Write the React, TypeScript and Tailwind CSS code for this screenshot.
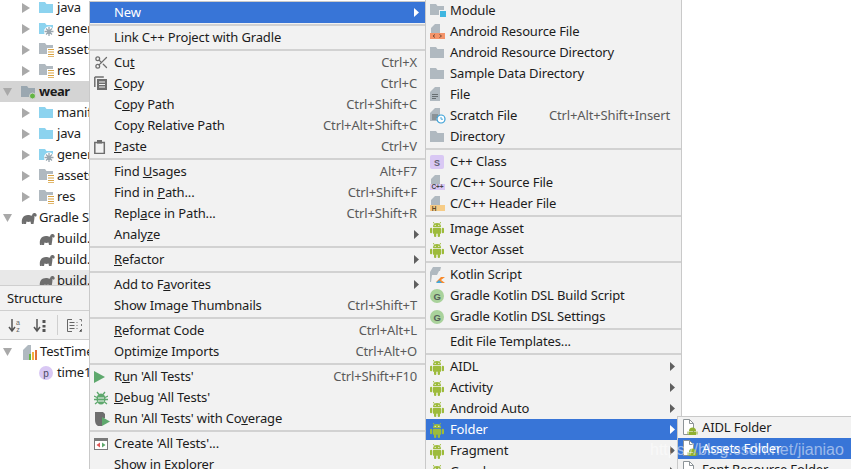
import React from "react";
import { Scissors } from "lucide-react";

type I = React.ReactNode;

const Sv = ({ w = 16, h = 16, children }: { w?: number; h?: number; children: I }) => (
  <svg width={w} height={h} viewBox={`0 0 ${w} ${h}`} className="shrink-0">
    {children}
  </svg>
);

const FOLDER = "M0 1h6l1.5 2H14v9H0z";

const Folder = ({ c = "#b0b9c0" }: { c?: string }) => (
  <Sv w={15} h={13}><path d={FOLDER} fill={c} /></Sv>
);
const BlueFolder = () => <Folder c="#8cd3ef" />;
const GenFolder = () => (
  <Sv w={15} h={14}>
    <path d={FOLDER} fill="#8cd3ef" />
    <circle cx="10" cy="9.5" r="5" fill="#fff" />
    <path d="M10 5v9M5.5 9.5h9M7 6.5l6 6M13 6.5l-6 6" stroke="#9aa7b0" strokeWidth="1.3" />
  </Sv>
);
const ResFolder = () => (
  <Sv w={16} h={15}>
    <path d={FOLDER} fill="#b0b9c0" />
    <rect x="8" y="6" width="8" height="9" fill="#fff" />
    <path d="M9 7.5h6M9 10h6M9 12.5h6M9 14.7h6" stroke="#d9a343" strokeWidth="1.1" />
  </Sv>
);
const WearFolder = () => (
  <Sv w={15} h={15}>
    <path d={FOLDER} fill="#9aa7b0" />
    <circle cx="11.5" cy="11" r="3" fill="#62b543" stroke="#d4d4d4" />
  </Sv>
);
const Elephant = () => (
  <Sv w={16} h={13}>
    <path
      d="M1 13C0 8 2 4 7 4c2 0 3 1 4 .5C11.500 2 13 1.500 14.500 2.200 16 3 16 5 15 5.500c-1 .5-1-.5-1.500-.5 0 3-.5 5-1 8H10l-.5-2.500c-1.500.5-3 .5-4 0L5 13H3l-.2-2.500L2.800 13z"
      fill="#6e6e6e"
    />
  </Sv>
);

const Tri = () => (
  <svg width="8" height="10" viewBox="0 0 8 10" className="shrink-0"><path d="M0 0l8 5-8 5z" fill="#a9a9a9" /></svg>
);
const TriDown = () => (
  <svg width="9" height="8" viewBox="0 0 9 8" className="shrink-0"><path d="M0 0h9L4.500 8z" fill="#a9a9a9" /></svg>
);

const Row = ({ label, icon, bold }: { label: string; icon: I; bold?: boolean }) => (
  <div className="flex h-[21px] items-center whitespace-nowrap pl-[22px]">
    <div className="flex w-[17px] shrink-0"><Tri /></div>
    <div className="flex w-[18px] shrink-0 justify-start">{icon}</div>
    <span className={bold ? "font-bold" : ""}>{label}</span>
  </div>
);

const Android = () => (
  <Sv w={14} h={16}>
    <g fill="#9dbb3b">
      <path d="M3 6a4 4 0 0 1 8 0z" />
      <path d="M4.300 2.800L3.300 1M9.700 2.800l1-1.800" stroke="#9dbb3b" strokeWidth=".9" />
      <rect x="3" y="6.800" width="8" height="6" rx=".6" />
      <rect x="0" y="6.800" width="2.300" height="5.500" rx="1.100" />
      <rect x="11.700" y="6.800" width="2.300" height="5.500" rx="1.100" />
      <rect x="4" y="12" width="2.300" height="4" rx="1" />
      <rect x="7.700" y="12" width="2.300" height="4" rx="1" />
    </g>
    <circle cx="5.200" cy="4.400" r=".6" fill="#f2f2f2" />
    <circle cx="8.800" cy="4.400" r=".6" fill="#f2f2f2" />
  </Sv>
);
const Sheet = ({ c = "#b0b9c0" }: { c?: string }) => <path d="M5 0h5v9H1V4z" fill={c} />;
const GrayFolderIcon = () => <Folder />;
const ModuleIcon = () => (
  <Sv w={16} h={15}>
    <path d={FOLDER} fill="#b0b9c0" />
    <rect x="9" y="7" width="7" height="7" fill="#f2f2f2" />
    <rect x="10" y="8" width="6" height="6" fill="#40b6e0" />
  </Sv>
);
const ResFile = () => (
  <Sv w={16} h={15}>
    <Sheet />
    <rect x="0" y="9" width="15" height="6" fill="#f4946a" />
    <path d="M5 10.500L3 12l2 1.500M9.500 10.500l2 1.500-2 1.500" stroke="#5a3a28" strokeWidth=".8" fill="none" />
  </Sv>
);
const FileIcon = () => (
  <Sv w={14} h={15}>
    <path d="M5 0h5v14H0V5z" fill="#b0b9c0" />
    <path d="M2 7.500h6M2 9.500h6M2 11.500h4" stroke="#5f6568" strokeWidth=".9" />
  </Sv>
);
const ScratchIcon = () => (
  <Sv w={16} h={16}>
    <path d="M5 0h5v13H0V5z" fill="#b0b9c0" />
    <path d="M2 7h6M2 9h6M2 11h4" stroke="#5f6568" strokeWidth=".9" />
    <circle cx="11" cy="11" r="4" fill="#fff" stroke="#389fd6" strokeWidth="1.200" />
    <path d="M11 9v2.200h2" stroke="#389fd6" strokeWidth=".9" fill="none" />
  </Sv>
);
const SIcon = () => (
  <Sv w={14} h={14}>
    <rect width="14" height="14" rx="2" fill="#d9c8f4" />
    <text x="7" y="10.500" textAnchor="middle" fontSize="9" fontWeight="700" fill="#5f5f70" fontFamily="Liberation Sans">S</text>
  </Sv>
);
const CppIcon = () => (
  <Sv w={16} h={15}>
    <Sheet />
    <rect x="0" y="9" width="15" height="6" fill="#d9c8f4" />
    <text x="7.500" y="14.300" textAnchor="middle" fontSize="6.500" fontWeight="700" fill="#444" fontFamily="Liberation Sans">C++</text>
  </Sv>
);
const HIcon = () => (
  <Sv w={16} h={15}>
    <Sheet />
    <rect x="0" y="9" width="15" height="6" fill="#f6cc87" />
    <text x="4" y="14.500" textAnchor="middle" fontSize="6.500" fontWeight="700" fill="#5a4a2a" fontFamily="Liberation Sans">H</text>
  </Sv>
);
const KotlinIcon = () => (
  <Sv w={15} h={16}>
    <path d="M3 0h8l-1 4H9L7 8H2L1 15H0V5z" fill="#b0b9c0" />
    <path d="M6 15l5-5h4l-4 3 4 3H8z" fill="#f88a2c" />
    <path d="M6 16l3-3 3 3z" fill="#40a8e0" />
  </Sv>
);
const GIcon = () => (
  <Sv w={14} h={14}>
    <circle cx="7" cy="7" r="7" fill="#a9d29b" />
    <text x="7" y="10.500" textAnchor="middle" fontSize="9.500" fontWeight="700" fill="#54605a" fontFamily="Liberation Sans">G</text>
  </Sv>
);
const FolderFile = () => (
  <Sv w={18} h={17}>
    <path d="M1.500.5h6l4 4v11h-10z" fill="#fff" stroke="#8d9498" />
    <path d="M7.500 .5v4h4" fill="none" stroke="#8d9498" />
    <g fill="#8fb030">
      <path d="M7 12a3.500 3.500 0 0 1 7 0z" />
      <rect x="7" y="12.500" width="7" height="3.500" />
      <rect x="5.500" y="12.500" width="1" height="3" />
      <rect x="14.500" y="12.500" width="1" height="3" />
    </g>
  </Sv>
);

const CopyIcon = () => (
  <Sv w={14} h={15}>
    <path d="M.8 1h9" stroke="#6e6e6e" strokeWidth="1.500" />
    <path d="M.8 1v10" stroke="#6e6e6e" strokeWidth="1.500" />
    <rect x="3" y="3" width="10" height="11" fill="#6e6e6e" />
    <path d="M5 6h6M5 8.500h6M5 11h6" stroke="#f2f2f2" />
  </Sv>
);
const PasteIcon = () => (
  <Sv w={12} h={14}>
    <rect x=".8" y="2.500" width="9.500" height="11" fill="none" stroke="#6e6e6e" strokeWidth="1.500" />
    <rect x="3" y="0" width="5" height="3.500" fill="#6e6e6e" />
  </Sv>
);
const RunIcon = () => (
  <Sv w={11} h={12}><path d="M0 0l11 6-11 6z" fill="#5ea86d" /></Sv>
);
const BugIcon = () => (
  <Sv w={14} h={14}>
    <ellipse cx="7" cy="8" rx="4.500" ry="5.500" fill="#5ea86d" />
    <path d="M3 1l2 2.500M11 1L9 3.500M0 5l3 1.500M14 5l-3 1.500M0 8.500h3M14 8.500h-3M1 13l2.500-2M13 13l-2.500-2" stroke="#5ea86d" strokeWidth="1.300" />
    <path d="M4 7h6M4 10h6" stroke="#f2f2f2" />
  </Sv>
);
const CoverageIcon = () => (
  <Sv w={16} h={14}>
    <path d="M1 0h8l2 2v4L8 8v6H4C2 13 1 11 1 8z" fill="#6e6e6e" />
    <path d="M8 5l8 4.500L8 14z" fill="#5ea86d" />
  </Sv>
);
const CreateIcon = () => (
  <Sv w={14} h={12}>
    <rect x=".5" y=".5" width="13" height="11" fill="#fff" stroke="#7a7a7a" />
    <path d="M1 1h12v2H1z" fill="#7a7a7a" />
    <path d="M6 4.500v5L2.500 7z" fill="#e05555" />
    <path d="M8 4.500v5L11.500 7z" fill="#5ea86d" />
  </Sv>
);

const Arrow = ({ white }: { white?: boolean }) => (
  <svg width="5" height="9" viewBox="0 0 5 9" className="absolute right-[6px] top-[6px]">
    <path d="M0 0l5 4.500L0 9z" fill={white ? "#ffffff" : "#5f5f5f"} />
  </svg>
);

const Item = ({
  icon,
  children,
  keys,
  arrow,
  active,
  right = "pr-[8px]",
}: {
  icon?: I;
  children: I;
  keys?: string;
  arrow?: boolean;
  active?: boolean;
  right?: string;
}) => (
  <div className={`relative flex h-[21px] items-center whitespace-nowrap ${right} ${active ? "bg-[#3875d7] text-white" : "text-[#1c1c1c]"}`}>
    <div className="flex w-[24px] shrink-0 items-center pl-[4px]">{icon}</div>
    <span className="flex-1">{children}</span>
    {keys && <span className="text-[#5a5a5a]">{keys}</span>}
    {arrow && <Arrow white={active} />}
  </div>
);

const Sep = () => (
  <div className="h-[4px] pt-[1px]"><div className="h-[2px] bg-[#d2d2d2]" /></div>
);

const ToolIcons = () => (
  <div className="flex h-[29px] items-center border-b border-[#cfcfcf] bg-[#f2f2f2]">
    <svg width="14" height="15" viewBox="0 0 14 15" className="ml-[8px] shrink-0">
      <path d="M4 1v11M1 9l3 4 3-4" stroke="#555" strokeWidth="1.500" fill="none" />
      <text x="10" y="7" textAnchor="middle" fontSize="7" fill="#666" fontFamily="Liberation Sans">a</text>
      <text x="10" y="14" textAnchor="middle" fontSize="7" fill="#666" fontFamily="Liberation Sans">z</text>
    </svg>
    <svg width="14" height="15" viewBox="0 0 14 15" className="ml-[11px] shrink-0">
      <path d="M4 1v11M1 9l3 4 3-4" stroke="#555" strokeWidth="1.500" fill="none" />
      <path d="M9.500 2h3v3h-3zM9.500 7h3v2.500h-3zM9.500 11h3v3h-3z" fill="#555" />
    </svg>
    <div className="ml-[10px] h-[20px] w-px bg-[#cfcfcf]" />
    <svg width="15" height="13" viewBox="0 0 15 13" className="ml-[9px] shrink-0">
      <path d="M5 .5H.5v12H5" stroke="#666" fill="none" />
      <path d="M2.500 3.500h5M2.500 6.500h5M2.500 9.500h5" stroke="#666" />
      <path d="M9.500 3.500h1M9.500 6.500h1M9.500 9.500h1M12.500 .5h2M14.500 .5v2M14.500 5v2M14.500 10v2.500h-2" stroke="#777" />
    </svg>
  </div>
);

export default function App() {
  return (
    <div className="relative flex h-[469px] w-[851px] overflow-hidden bg-white font-['Noto_Sans','Liberation_Sans',sans-serif] text-[13px] tracking-[-0.14px] text-[#1c1c1c]">
      <aside className="flex w-[89px] shrink-0 flex-col overflow-hidden">
        <div className="-mt-[3px] h-[288px] overflow-hidden">
          <Row label="java" icon={<BlueFolder />} />
          <Row label="generated" icon={<GenFolder />} />
          <Row label="assets" icon={<ResFolder />} />
          <Row label="res" icon={<ResFolder />} />
          <div className="flex h-[21px] items-center whitespace-nowrap bg-[#d4d4d4] pl-[3px] pt-px">
            <div className="flex w-[18px] shrink-0"><TriDown /></div>
            <div className="flex w-[18px] shrink-0"><WearFolder /></div>
            <span className="font-bold tracking-[-0.5px]">wear</span>
          </div>
          <Row label="manifests" icon={<BlueFolder />} />
          <Row label="java" icon={<BlueFolder />} />
          <Row label="generated" icon={<GenFolder />} />
          <Row label="assets" icon={<ResFolder />} />
          <Row label="res" icon={<ResFolder />} />
          <div className="flex h-[21px] items-center whitespace-nowrap pl-[3px]">
            <div className="flex w-[18px] shrink-0"><TriDown /></div>
            <div className="flex w-[18px] shrink-0"><Elephant /></div>
            <span>Gradle Scripts</span>
          </div>
          {[0, 1, 2].map((i) => (
            <div key={i} className={`flex h-[21px] items-center whitespace-nowrap pl-[39px] ${i === 2 ? "bg-[#e8e8e8]" : ""}`}>
              <div className="flex w-[18px] shrink-0"><Elephant /></div>
              <span>build.gradle</span>
            </div>
          ))}
        </div>
        <div className="flex h-[26px] shrink-0 items-center border-t border-b border-[#cfcfcf] bg-[#f2f2f2] pl-[7px] pt-[2px]">Structure</div>
        <ToolIcons />
        <div className="pt-px">
          <div className="flex h-[21px] items-center whitespace-nowrap pl-[3px]">
            <div className="flex w-[20px] shrink-0"><TriDown /></div>
            <svg width="14" height="16" viewBox="0 0 14 16" className="mr-[3px] shrink-0">
              <path d="M0 6l5-5h3v15H0z" fill="#b0b9c0" />
              <rect x="6" y="10" width="2" height="6" fill="#62b543" />
              <rect x="9" y="8" width="2" height="8" fill="#f4af3d" />
              <rect x="12" y="6" width="2" height="10" fill="#e0713a" />
            </svg>
            <span>TestTimeDemo</span>
          </div>
          <div className="flex h-[21px] items-center whitespace-nowrap pl-[39px]">
            <svg width="14" height="14" viewBox="0 0 14 14" className="mr-[4px] shrink-0">
              <circle cx="7" cy="7" r="7" fill="#d9c8f4" />
              <text x="7" y="10.500" textAnchor="middle" fontSize="10" fill="#4a4a60" fontFamily="Liberation Sans">p</text>
            </svg>
            <span>time1</span>
          </div>
        </div>
      </aside>

      <div className="absolute left-[89px] top-[1px] w-[337px] border border-[#c9c9c9] bg-[#f2f2f2]">
        <Item active arrow>New</Item>
        <Sep />
        <Item>Link C++ Project with Gradle</Item>
        <Sep />
        <Item icon={<Scissors size={15} color="#6e6e6e" strokeWidth={2} />} keys="Ctrl+X">Cu<u>t</u></Item>
        <Item icon={<CopyIcon />} keys="Ctrl+C"><u>C</u>opy</Item>
        <Item keys="Ctrl+Shift+C">C<u>o</u>py Path</Item>
        <Item keys="Ctrl+Alt+Shift+C">Cop<u>y</u> Relative Path</Item>
        <Item icon={<PasteIcon />} keys="Ctrl+V"><u>P</u>aste</Item>
        <Sep />
        <Item keys="Alt+F7">Find <u>U</u>sages</Item>
        <Item keys="Ctrl+Shift+F">Find in <u>P</u>ath...</Item>
        <Item keys="Ctrl+Shift+R">Repl<u>a</u>ce in Path...</Item>
        <Item arrow>Analy<u>z</u>e</Item>
        <Sep />
        <Item arrow><u>R</u>efactor</Item>
        <Sep />
        <Item arrow>Add to F<u>a</u>vorites</Item>
        <Item keys="Ctrl+Shift+T">Show Image Thumbnails</Item>
        <Sep />
        <Item keys="Ctrl+Alt+L"><u>R</u>eformat Code</Item>
        <Item keys="Ctrl+Alt+O">Optimi<u>z</u>e Imports</Item>
        <Sep />
        <Item icon={<RunIcon />} keys="Ctrl+Shift+F10">R<u>u</u>n 'All Tests'</Item>
        <Item icon={<BugIcon />}><u>D</u>ebug 'All Tests'</Item>
        <Item icon={<CoverageIcon />}>Run 'All Tests' with Co<u>v</u>erage</Item>
        <Sep />
        <Item icon={<CreateIcon />}>Create 'All Tests'...</Item>
        <Item>Show in Explorer</Item>
      </div>

      <div className="absolute left-[425px] -top-px w-[257px] border border-[#c9c9c9] bg-[#f2f2f2]">
        <Item icon={<ModuleIcon />}>Module</Item>
        <Item icon={<ResFile />}>Android Resource File</Item>
        <Item icon={<GrayFolderIcon />}>Android Resource Directory</Item>
        <Item icon={<GrayFolderIcon />}>Sample Data Directory</Item>
        <Item icon={<FileIcon />}>File</Item>
        <Item icon={<ScratchIcon />} keys="Ctrl+Alt+Shift+Insert" right="pr-[11px]">Scratch File</Item>
        <Item icon={<GrayFolderIcon />}>Directory</Item>
        <Sep />
        <Item icon={<SIcon />}>C++ Class</Item>
        <Item icon={<CppIcon />}>C/C++ Source File</Item>
        <Item icon={<HIcon />}>C/C++ Header File</Item>
        <Sep />
        <Item icon={<Android />}>Image Asset</Item>
        <Item icon={<Android />}>Vector Asset</Item>
        <Sep />
        <Item icon={<KotlinIcon />}>Kotlin Script</Item>
        <Item icon={<GIcon />}>Gradle Kotlin DSL Build Script</Item>
        <Item icon={<GIcon />}>Gradle Kotlin DSL Settings</Item>
        <Sep />
        <Item>Edit File Templates...</Item>
        <Sep />
        <Item icon={<Android />} arrow>AIDL</Item>
        <Item icon={<Android />} arrow>Activity</Item>
        <Item icon={<Android />} arrow>Android Auto</Item>
        <Item icon={<Android />} arrow active>Folder</Item>
        <Item icon={<Android />} arrow>Fragment</Item>
        <Item icon={<Android />} arrow>Google</Item>
      </div>

      <div className="absolute left-[677px] top-[416px] w-[200px] border border-[#c9c9c9] bg-[#f2f2f2]">
        <Item icon={<FolderFile />}>AIDL Folder</Item>
        <Item icon={<FolderFile />} active>Assets Folder</Item>
        <Item icon={<FolderFile />}>Font Resource Folder</Item>
      </div>

      <div className="pointer-events-none absolute left-[650px] top-[438px] whitespace-nowrap font-['Liberation_Sans',sans-serif] text-[16px] tracking-normal text-white/50">
        https://blog.csdn.net/jianiao
      </div>
    </div>
  );
}
